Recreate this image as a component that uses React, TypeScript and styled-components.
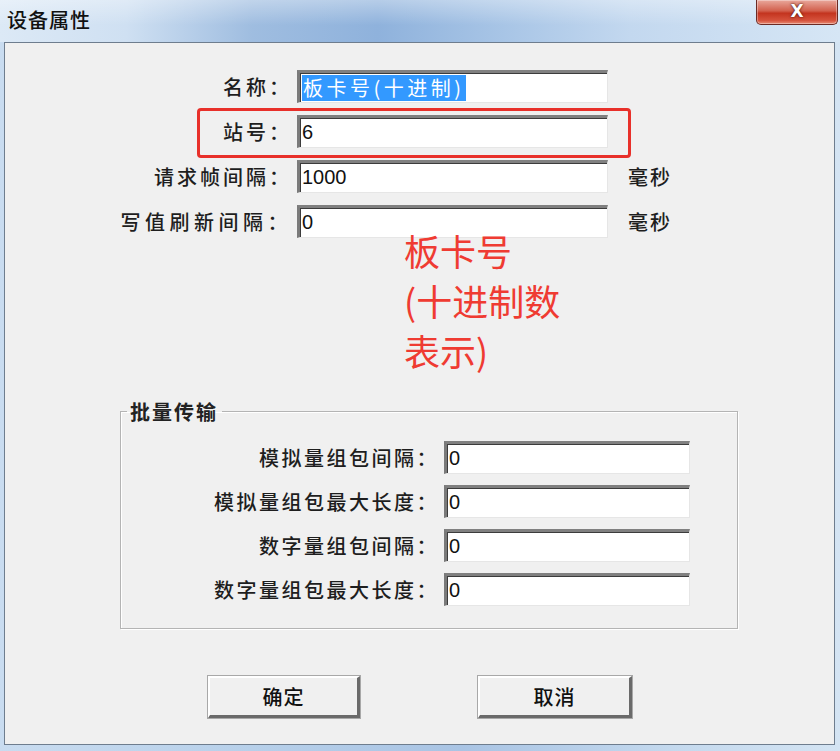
import React from "react";
import styled, { createGlobalStyle } from "styled-components";

const Global = createGlobalStyle`
  html, body { margin: 0; padding: 0; }
  body {
    width: 840px; height: 751px; overflow: hidden;
    font-family: "Noto Sans CJK SC", "Noto Sans", sans-serif;
  }
`;

const Window = styled.div`
  width: 840px;
  height: 751px;
  box-sizing: border-box;
  display: flex;
  flex-direction: column;
  background: linear-gradient(90deg, #c9dcf0 0%, #b7d0ea 30%, #a9c4e4 55%, #c4d9ee 80%, #d4e4f3 100%);
`;

const TitleBar = styled.div`
  height: 42px;
  flex: none;
  display: flex;
  align-items: flex-start;
  background:
    linear-gradient(180deg, rgba(255,255,255,0.35) 0%, rgba(255,255,255,0) 60%),
    linear-gradient(90deg, #dce9f6 0%, #cfe0f2 15%, #9fbde0 30%, #8fb2dc 45%, #a8c5e6 60%, #c3d8ef 75%, #d6e6f5 100%);
`;

const Title = styled.div`
  padding: 5px 0 0 7px;
  font-size: 20px;
  font-weight: 500;
  color: #111;
  letter-spacing: 1px;
`;

const CloseButton = styled.div`
  margin-left: auto;
  margin-right: 2px;
  width: 82px;
  height: 25px;
  border: 1px solid #6b2a24;
  border-top: none;
  border-radius: 0 0 5px 5px;
  background: linear-gradient(180deg, #e9a89c 0%, #d2604d 45%, #c3341f 55%, #d5523c 85%, #e88c76 100%);
  box-shadow: inset 0 0 0 1px rgba(255,255,255,0.35);
  display: flex;
  align-items: center;
  justify-content: center;
  color: #fff;
  font-family: "DejaVu Sans", sans-serif;
  font-weight: bold;
  font-size: 17px;
  text-shadow: 0 0 3px #5a1a10, 0 0 1px #5a1a10;
  line-height: 1;
  padding-bottom: 2px;
  box-sizing: border-box;
`;

const Client = styled.div`
  position: relative;
  margin: 0 5px 6px 4px;
  flex: 1;
  border: 1px solid #6e7d8e;
  background: #f0f0f0;
  display: flex;
  flex-direction: column;
  padding-top: 27px;
  box-sizing: border-box;
`;

const TopGrid = styled.div`
  display: grid;
  grid-template-columns: 285px 311px auto;
  column-gap: 7px;
  row-gap: 12px;
  align-items: center;
`;

const Label = styled.label<{ $spacing?: number }>`
  text-align: right;
  font-size: 20px;
  font-weight: 500;
  color: #1e1e1e;
  white-space: nowrap;
  letter-spacing: ${(p) => p.$spacing ?? 2.5}px;
  margin-right: -2px;
`;

const Input = styled.div`
  height: 33px;
  box-sizing: border-box;
  background: #fff;
  border-top: 3px solid #808080;
  border-left: 3px solid #7a7a7a;
  border-right: 1px solid #e6e6e6;
  border-bottom: 1px solid #e6e6e6;
  box-shadow: inset 1px 1px 0 #3c3c3c;
  display: flex;
  align-items: center;
  padding-left: 2px;
  font-family: "Liberation Sans", "Noto Sans CJK SC", sans-serif;
  font-size: 20px;
  color: #111;
`;

const Selected = styled.span`
  background: #3399ff;
  color: #fff;
  font-family: "Noto Sans CJK SC", sans-serif;
  font-size: 20px;
  letter-spacing: 3.5px;
  padding: 0 1px;
  line-height: 26px;
`;

const Unit = styled.span`
  margin-left: 13px;
  font-size: 20px;
  font-weight: 500;
  letter-spacing: 2px;
  color: #1e1e1e;
`;

const Highlight = styled.div`
  position: absolute;
  left: 192px;
  top: 65px;
  width: 434px;
  height: 50px;
  box-sizing: border-box;
  border: 3px solid #e8302a;
  border-radius: 4px;
  pointer-events: none;
`;

const Note = styled.div`
  position: absolute;
  left: 399px;
  top: 182px;
  font-size: 36px;
  line-height: 50px;
  color: #ef3b32;
  font-family: "Noto Sans CJK SC", sans-serif;
`;

const Group = styled.fieldset`
  margin: 159px 0 0 115px;
  width: 618px;
  height: 232px;
  box-sizing: border-box;
  border: 1px solid #b4b4b4;
  box-shadow: inset 1px 1px 0 #fff, 1px 1px 0 #fff;
  padding: 15px 0 0 0;
  display: grid;
  grid-template-columns: 316px 246px;
  column-gap: 7px;
  row-gap: 11px;
  align-content: start;
  align-items: center;
`;

const Legend = styled.legend`
  margin-left: 6px;
  padding: 0 4px 0 3px;
  font-size: 20px;
  font-weight: bold;
  color: #222;
  letter-spacing: 2px;
`;

const ButtonRow = styled.div`
  margin-top: 47px;
  display: flex;
  padding-left: 203px;
  gap: 118px;
`;

const Button = styled.button<{ $w: number }>`
  width: ${(p) => p.$w}px;
  height: 42px;
  box-sizing: border-box;
  background: #f0f0f0;
  border-top: 2px solid #ffffff;
  border-left: 2px solid #ffffff;
  border-right: 3px solid #6a6a6a;
  border-bottom: 3px solid #6a6a6a;
  outline: 1px solid #a8a8a8;
  font-family: "Noto Sans CJK SC", sans-serif;
  font-size: 20px;
  font-weight: 500;
  letter-spacing: 1px;
  color: #111;
  padding: 0;
`;

export default function App() {
  return (
    <>
      <Global />
      <Window>
        <TitleBar>
          <Title>设备属性</Title>
          <CloseButton>X</CloseButton>
        </TitleBar>
        <Client>
          <TopGrid>
            <Label $spacing={3}>名称：</Label>
            <Input><Selected>板卡号(十进制)</Selected></Input>
            <span />
            <Label $spacing={3}>站号：</Label>
            <Input>6</Input>
            <span />
            <Label $spacing={3}>请求帧间隔：</Label>
            <Input>1000</Input>
            <Unit>毫秒</Unit>
            <Label $spacing={4.5}>写值刷新间隔：</Label>
            <Input>0</Input>
            <Unit>毫秒</Unit>
          </TopGrid>
          <Highlight />
          <Note>
            板卡号
            <br />
            (十进制数
            <br />
            表示)
          </Note>
          <Group>
            <Legend>批量传输</Legend>
            <Label>模拟量组包间隔：</Label>
            <Input>0</Input>
            <Label>模拟量组包最大长度：</Label>
            <Input>0</Input>
            <Label>数字量组包间隔：</Label>
            <Input>0</Input>
            <Label>数字量组包最大长度：</Label>
            <Input>0</Input>
          </Group>
          <ButtonRow>
            <Button $w={152}>确定</Button>
            <Button $w={154}>取消</Button>
          </ButtonRow>
        </Client>
      </Window>
    </>
  );
}
